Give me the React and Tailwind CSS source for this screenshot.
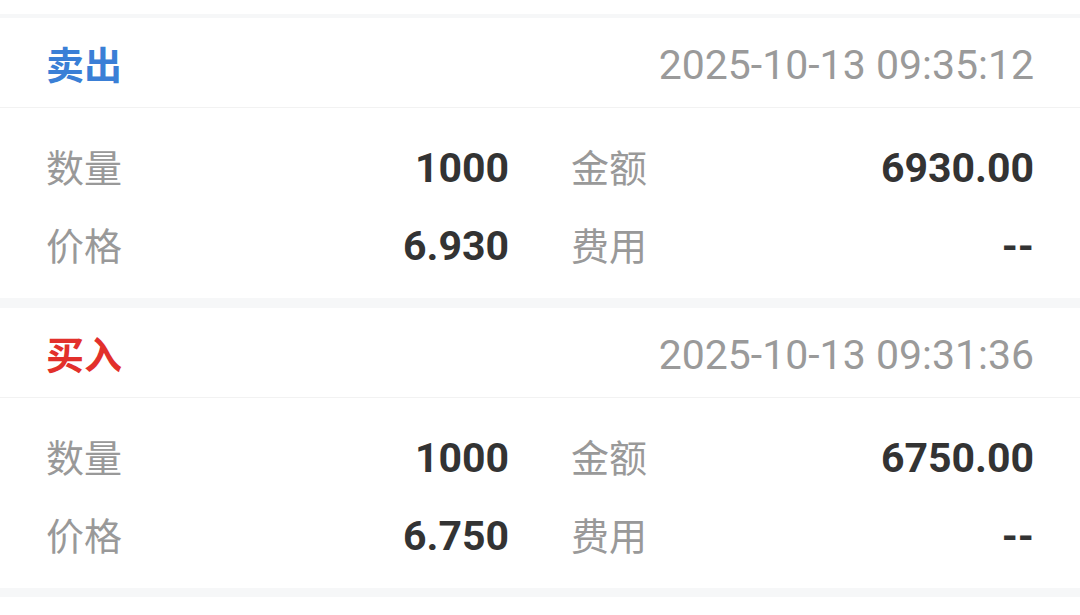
const trades = [
  {
    side: "卖出",
    sideColor: "text-[#3a7fd6]",
    time: "2025-10-13 09:35:12",
    qty: "1000",
    amount: "6930.00",
    price: "6.930",
    fee: "--",
  },
  {
    side: "买入",
    sideColor: "text-[#e2302b]",
    time: "2025-10-13 09:31:36",
    qty: "1000",
    amount: "6750.00",
    price: "6.750",
    fee: "--",
  },
];

function Cell({ label, value }) {
  return (
    <div className="flex items-center justify-between">
      <span className="text-[38px] leading-none text-[#999999]">{label}</span>
      <span className="text-[41px] font-bold leading-none text-[#333333]">
        {value}
      </span>
    </div>
  );
}

function TradeCard({ trade }) {
  return (
    <div className="bg-white">
      <div className="flex h-[90px] items-center justify-between border-b border-[#f2f2f2] px-[46px] pt-[6px]">
        <span className={`text-[38px] font-bold leading-none ${trade.sideColor}`}>
          {trade.side}
        </span>
        <span className="text-[41px] leading-none text-[#9a9a9a]">
          {trade.time}
        </span>
      </div>
      <div className="grid h-[190px] grid-cols-2 gap-x-[62px] gap-y-[37px] px-[46px] pt-[40px] pb-[73px]">
        <Cell label="数量" value={trade.qty} />
        <Cell label="金额" value={trade.amount} />
        <Cell label="价格" value={trade.price} />
        <Cell label="费用" value={trade.fee} />
      </div>
    </div>
  );
}

export default function App() {
  return (
    <div
      className="h-[615px] w-[1080px] overflow-hidden bg-white"
      style={{ fontFamily: 'Roboto, "Noto Sans CJK SC", sans-serif' }}
    >
      <div className="h-[14px] bg-white" />
      <div className="flex flex-col gap-[10px] bg-[#f6f7f8] pt-[4px] pb-[9px]">
        {trades.map((t) => (
          <TradeCard key={t.time} trade={t} />
        ))}
      </div>
    </div>
  );
}
